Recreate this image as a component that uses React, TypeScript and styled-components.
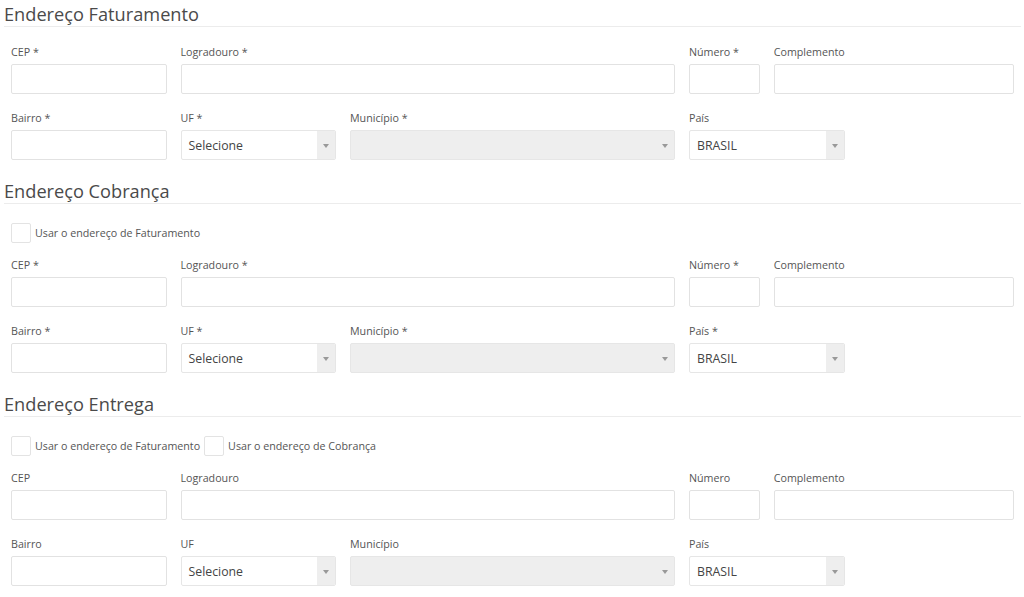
import React from "react";
import styled, { createGlobalStyle } from "styled-components";

const Global = createGlobalStyle`
  html, body { margin: 0; padding: 0; background: #fff; }
  body { font-family: "Open Sans", "Noto Sans", Arial, sans-serif; color: #555; }
  * { box-sizing: border-box; }
`;

const Page = styled.div`
  padding: 2px 3px 0 4px;
  display: flex;
  flex-direction: column;
  gap: 19px;
`;

const Section = styled.section`
  display: flex;
  flex-direction: column;
`;

const Heading = styled.h2`
  margin: 0;
  font-size: 18.2px;
  font-weight: 400;
  line-height: 24px;
  color: #4a4a4a;
  border-bottom: 1px solid #ececec;
`;

const Body = styled.div<{ $top: number }>`
  padding: ${(p) => p.$top}px 7px 0 7px;
  display: flex;
  flex-direction: column;
  gap: 16px;
`;

const Checks = styled.div`
  display: flex;
  align-items: center;
  margin-bottom: -2px;
`;

const CheckLabel = styled.label`
  display: flex;
  align-items: center;
  font-size: 10.7px;
  color: #555;
  margin-right: 4px;
`;

const Box = styled.span`
  width: 20px;
  height: 20px;
  border: 1px solid #e3e3e3;
  border-radius: 2px;
  margin-right: 4px;
  background: #fff;
`;

const Row = styled.div`
  display: grid;
  grid-template-columns: repeat(12, 1fr);
  column-gap: 14px;
`;

const Field = styled.div<{ $span: number }>`
  grid-column: span ${(p) => p.$span};
  display: flex;
  flex-direction: column;
  gap: 4px;
`;

const Label = styled.label`
  font-size: 10.7px;
  line-height: 16px;
  color: #555;
  white-space: nowrap;
`;

const Input = styled.div`
  height: 30px;
  border: 1px solid #e2e2e2;
  border-radius: 2px;
  background: #fff;
`;

const Select = styled.div<{ $disabled?: boolean }>`
  height: 30px;
  border: 1px solid #e6e6e6;
  border-radius: 2px;
  background: ${(p) => (p.$disabled ? "#eeeeee" : "#fff")};
  display: flex;
  align-items: center;
  font-size: 12.3px;
  color: #444;
  overflow: hidden;
`;

const SelectText = styled.span`
  flex: 1;
  padding-left: 7px;
`;

const Arrow = styled.span`
  width: 18px;
  align-self: stretch;
  background: #eeeeee;
  display: flex;
  align-items: center;
  justify-content: center;
  &::after {
    content: "";
    width: 0;
    height: 0;
    border-left: 3.5px solid transparent;
    border-right: 3.5px solid transparent;
    border-top: 4px solid #999;
    margin-top: 1px;
  }
`;

type Req = { req: boolean };

function AddressRows({ req, paisReq }: Req & { paisReq: boolean }) {
  const s = req ? " *" : "";
  return (
    <>
      <Row>
        <Field $span={2}>
          <Label>CEP{s}</Label>
          <Input />
        </Field>
        <Field $span={6}>
          <Label>Logradouro{s}</Label>
          <Input />
        </Field>
        <Field $span={1}>
          <Label>Número{s}</Label>
          <Input />
        </Field>
        <Field $span={3}>
          <Label>Complemento</Label>
          <Input />
        </Field>
      </Row>
      <Row>
        <Field $span={2}>
          <Label>Bairro{s}</Label>
          <Input />
        </Field>
        <Field $span={2}>
          <Label>UF{s}</Label>
          <Select>
            <SelectText>Selecione</SelectText>
            <Arrow />
          </Select>
        </Field>
        <Field $span={4}>
          <Label>Município{s}</Label>
          <Select $disabled>
            <SelectText />
            <Arrow />
          </Select>
        </Field>
        <Field $span={2}>
          <Label>País{paisReq ? " *" : ""}</Label>
          <Select>
            <SelectText>BRASIL</SelectText>
            <Arrow />
          </Select>
        </Field>
      </Row>
    </>
  );
}

export default function App() {
  return (
    <>
      <Global />
      <Page>
        <Section>
          <Heading>Endereço Faturamento</Heading>
          <Body $top={17}>
            <AddressRows req paisReq={false} />
          </Body>
        </Section>
        <Section>
          <Heading>Endereço Cobrança</Heading>
          <Body $top={19}>
            <Checks>
              <CheckLabel>
                <Box />
                Usar o endereço de Faturamento
              </CheckLabel>
            </Checks>
            <AddressRows req paisReq />
          </Body>
        </Section>
        <Section>
          <Heading>Endereço Entrega</Heading>
          <Body $top={19}>
            <Checks>
              <CheckLabel>
                <Box />
                Usar o endereço de Faturamento
              </CheckLabel>
              <CheckLabel>
                <Box />
                Usar o endereço de Cobrança
              </CheckLabel>
            </Checks>
            <AddressRows req={false} paisReq={false} />
          </Body>
        </Section>
      </Page>
    </>
  );
}
